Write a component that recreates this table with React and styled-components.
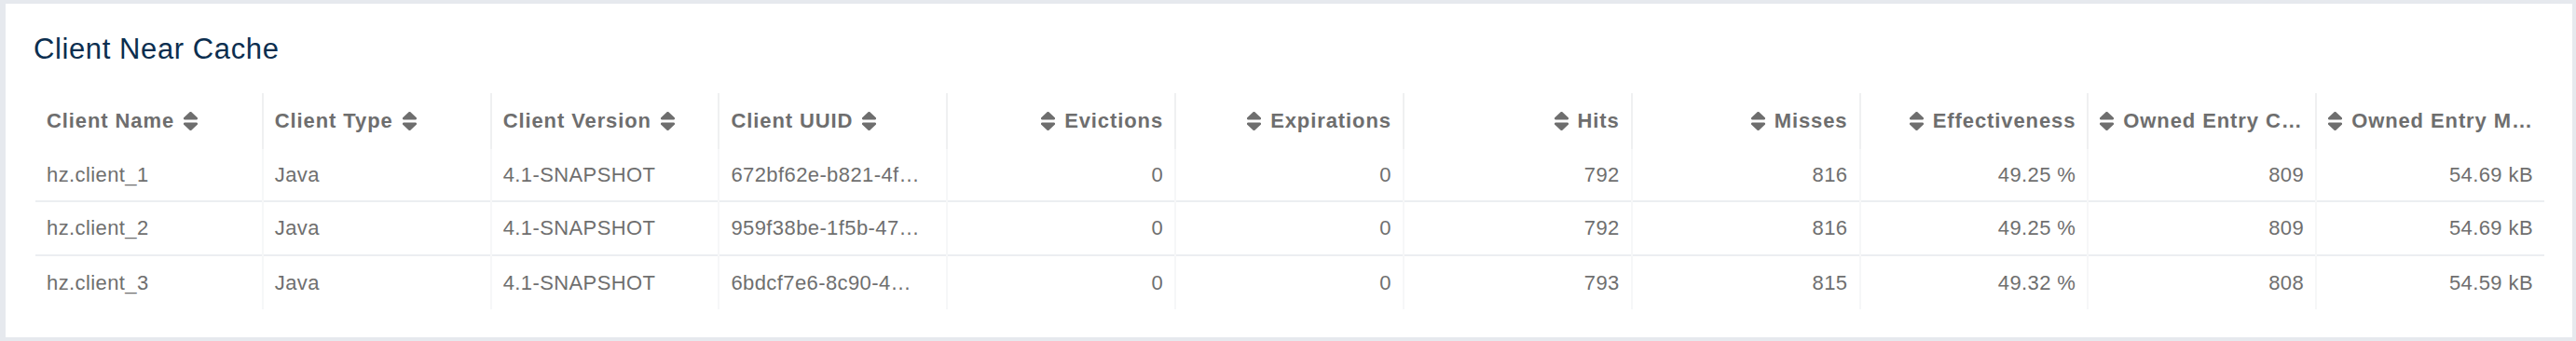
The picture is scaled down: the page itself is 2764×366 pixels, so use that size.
import React from "react";
import styled, { createGlobalStyle } from "styled-components";

const GlobalStyle = createGlobalStyle`
  html, body {
    margin: 0;
    padding: 0;
    background-color: #e6e9ee;
  }
  * {
    box-sizing: border-box;
  }
`;

const Page = styled.div`
  width: 100%;
  padding: 4px 4px 4px 6px;
  background-color: #e6e9ee;
`;

const Card = styled.section`
  background-color: #fff;
  padding: 31px 30px 30px;
`;

const Title = styled.h2`
  margin: 0 0 29px;
  font-family: "Liberation Sans", Arial, sans-serif;
  font-size: 31px;
  line-height: 36px;
  font-weight: normal;
  letter-spacing: 0.6px;
  color: #0b2e4f;
`;

const Table = styled.table`
  width: 100%;
  table-layout: fixed;
  border-collapse: collapse;
  font-family: "Liberation Sans", Arial, sans-serif;
`;

const Th = styled.th`
  height: 60px;
  padding: 0 12px;
  font-size: 22px;
  font-weight: bold;
  letter-spacing: 0.9px;
  color: #6e6e6e;
  border-left: 2px solid ${(p) => (p.$first ? "transparent" : "#eff0f1")};
  vertical-align: middle;
`;

const HeadInner = styled.div`
  display: flex;
  align-items: center;
  justify-content: ${(p) => (p.$right ? "flex-end" : "flex-start")};
  gap: 10px;
  min-width: 0;
`;

const Label = styled.span`
  overflow: hidden;
  white-space: nowrap;
  text-overflow: ellipsis;
  min-width: 0;
`;

const SortIcon = styled.svg`
  flex-shrink: 0;
  width: 15px;
  height: 20px;
  fill: #6e6e6e;
`;

const Row = styled.tr`
  & + & td {
    border-top: 2px solid #eceef1;
  }
`;

const Td = styled.td`
  height: ${(p) => (p.$first ? "56px" : "58px")};
  padding: 0 12px;
  font-size: 22px;
  letter-spacing: 0.4px;
  color: #6f6f6f;
  text-align: ${(p) => (p.$right ? "right" : "left")};
  white-space: nowrap;
  overflow: hidden;
  border-left: 2px solid ${(p) => (p.$firstCol ? "transparent" : "#f6f7f8")};
  vertical-align: middle;
`;

const columns = [
  { key: "name", label: "Client Name" },
  { key: "type", label: "Client Type" },
  { key: "version", label: "Client Version" },
  { key: "uuid", label: "Client UUID" },
  { key: "evictions", label: "Evictions", right: true },
  { key: "expirations", label: "Expirations", right: true },
  { key: "hits", label: "Hits", right: true },
  { key: "misses", label: "Misses", right: true },
  { key: "effectiveness", label: "Effectiveness", right: true },
  { key: "ownedCount", label: "Owned Entry Count", right: true },
  { key: "ownedMemory", label: "Owned Entry Memory", right: true },
];

// uuids are shortened the same way the console shows them
const rows = [
  {
    name: "hz.client_1",
    type: "Java",
    version: "4.1-SNAPSHOT",
    uuid: "672bf62e-b821-4f…",
    evictions: "0",
    expirations: "0",
    hits: "792",
    misses: "816",
    effectiveness: "49.25 %",
    ownedCount: "809",
    ownedMemory: "54.69 kB",
  },
  {
    name: "hz.client_2",
    type: "Java",
    version: "4.1-SNAPSHOT",
    uuid: "959f38be-1f5b-47…",
    evictions: "0",
    expirations: "0",
    hits: "792",
    misses: "816",
    effectiveness: "49.25 %",
    ownedCount: "809",
    ownedMemory: "54.69 kB",
  },
  {
    name: "hz.client_3",
    type: "Java",
    version: "4.1-SNAPSHOT",
    uuid: "6bdcf7e6-8c90-4…",
    evictions: "0",
    expirations: "0",
    hits: "793",
    misses: "815",
    effectiveness: "49.32 %",
    ownedCount: "808",
    ownedMemory: "54.59 kB",
  },
];

const Sort = () => (
  <SortIcon viewBox="20 57 280 398" preserveAspectRatio="none">
    <path d="M41 288h238c21.4 0 32.1 25.9 17 41L177 448c-9.4 9.4-24.6 9.4-33.9 0L24 329c-15.1-15.1-4.4-41 17-41zm255-105L177 64c-9.4-9.4-24.6-9.4-33.9 0L24 183c-15.1 15.1-4.4 41 17 41h238c21.4 0 32.1-25.9 17-41z" />
  </SortIcon>
);

export default function App() {
  return (
    <Page>
      <GlobalStyle />
      <Card>
        <Title>Client Near Cache</Title>
        <Table>
          <thead>
            <tr>
              {columns.map((c, i) => (
                <Th key={c.key} $first={i === 0}>
                  <HeadInner $right={c.right}>
                    {c.right && <Sort />}
                    <Label>{c.label}</Label>
                    {!c.right && <Sort />}
                  </HeadInner>
                </Th>
              ))}
            </tr>
          </thead>
          <tbody>
            {rows.map((r, ri) => (
              <Row key={r.name}>
                {columns.map((c, i) => (
                  <Td key={c.key} $right={c.right} $first={ri === 0} $firstCol={i === 0}>
                    {r[c.key]}
                  </Td>
                ))}
              </Row>
            ))}
          </tbody>
        </Table>
      </Card>
    </Page>
  );
}
